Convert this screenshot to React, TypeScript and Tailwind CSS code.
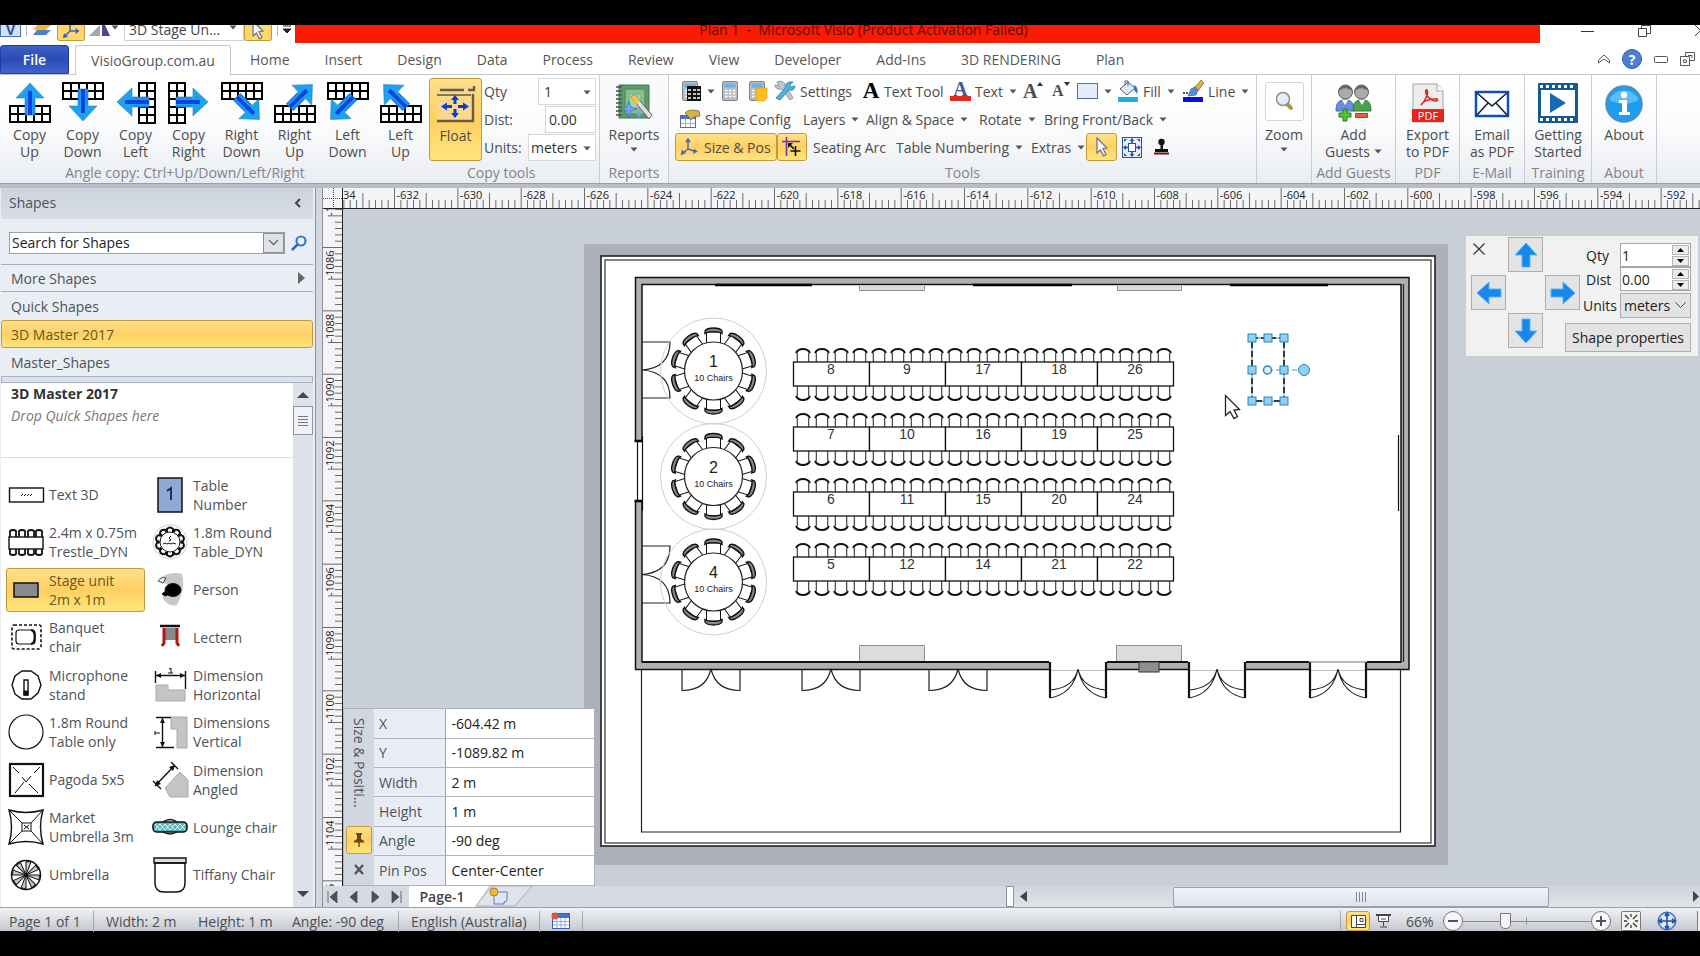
import type { ReactNode } from 'react';

const highlight = 'border border-[#c39a3a] rounded-[3px] bg-linear-to-b from-[#ffe08a] via-[#ffd062] to-[#ffe57c]';

const menuTabs = ['Home', 'Insert', 'Design', 'Data', 'Process', 'Review', 'View', 'Developer', 'Add-Ins', '3D RENDERING', 'Plan'];

const copyButtons = [
  { top: 'Copy', bottom: 'Up', angle: 0, grid: 'bottom' },
  { top: 'Copy', bottom: 'Down', angle: 180, grid: 'top' },
  { top: 'Copy', bottom: 'Left', angle: 270, grid: 'right' },
  { top: 'Copy', bottom: 'Right', angle: 90, grid: 'left' },
  { top: 'Right', bottom: 'Down', angle: 135, grid: 'top' },
  { top: 'Right', bottom: 'Up', angle: 45, grid: 'bottom' },
  { top: 'Left', bottom: 'Down', angle: 225, grid: 'top' },
  { top: 'Left', bottom: 'Up', angle: 315, grid: 'bottom' },
];

const trestleRows = [
  [8, 9, 17, 18, 26],
  [7, 10, 16, 19, 25],
  [6, 11, 15, 20, 24],
  [5, 12, 14, 21, 22],
];

const sizeRows = [
  ['X', '-604.42 m'],
  ['Y', '-1089.82 m'],
  ['Width', '2 m'],
  ['Height', '1 m'],
  ['Angle', '-90 deg'],
  ['Pin Pos', 'Center-Center'],
];

function Caret({ className = '' }: { className?: string }) {
  return (
    <svg width="8" height="5" viewBox="0 0 8 5" className={`shrink-0 ${className}`}>
      <path d="M0.5 0.5h7L4 4.5z" fill="#555" />
    </svg>
  );
}

/* ---------- ribbon icons ---------- */

function CopyIcon({ angle, grid }: { angle: number; grid: string }) {
  const vertical = grid === 'left' || grid === 'right';
  const ox = grid === 'right' ? 23 : 0;
  const oy = grid === 'bottom' ? 23 : 0;
  const cells = [];
  for (let a = 0; a < 5; a++) {
    for (let b = 0; b < 2; b++) {
      const x = ox + (vertical ? b * 8 : a * 8);
      const y = oy + (vertical ? a * 8 : b * 8);
      cells.push(<rect key={`${a}-${b}`} x={x + 1} y={y + 1} width="8" height="8" fill="#fff" stroke="#000" strokeWidth="2" />);
    }
  }
  const diagonal = angle % 90 !== 0;
  const rad = (angle * Math.PI) / 180;
  const dx = diagonal ? Math.sign(Math.sin(rad)) * 4 : 0;
  const dy = diagonal ? -Math.sign(Math.cos(rad)) * 4 : 0;
  return (
    <svg width="42" height="42" viewBox="0 0 42 42" className="overflow-visible">
      {cells}
      <g transform={`translate(${dx} ${dy}) rotate(${angle} 21 20)`}>
        <path d="M21 1L35 16H26V33H16V16H7z" fill="#1ba3f2" stroke="#3a7fa8" strokeWidth="0.6" />
        <path d="M21 9V33" stroke="#0b45e0" strokeWidth="4" />
        <path d="M17 33V17M25 33V17" stroke="#1b82ee" strokeWidth="1.4" />
      </g>
    </svg>
  );
}

function FloatIcon() {
  return (
    <svg width="42" height="40" viewBox="0 0 42 40">
      <path d="M2 2H39V37H2z" fill="#f6d98c" />
      <path d="M5 6H29M33 6H39V2M38 10V38M2 37H39" stroke="#6b5a45" strokeWidth="2.4" fill="none" />
      <path d="M2 11H36" stroke="#8a7448" strokeWidth="2" />
      <g fill="#1238d8">
        <path d="M20 11l4 5h-2.5v4h-3v-4H16zM20 34l4-5h-2.5v-4h-3v4H16zM6 22.5l6-4v2.5h5v3h-5v2.5zM34 22.5l-6-4v2.500h-5v3h5v2.5z" />
      </g>
    </svg>
  );
}

function ReportsIcon() {
  return (
    <svg width="40" height="40" viewBox="0 0 40 40">
      <path d="M5 2H35V35H5z" fill="#5f9a6b" stroke="#3f7350" />
      <path d="M11 6H31V31H11z" fill="#86bd8c" stroke="#4c8558" />
      <path d="M16 12H26V24H16z" fill="#a9d4aa" />
      {[4, 8, 12, 16, 20, 24, 28, 32].map(y => (
        <path key={y} d={`M2 ${y}h6`} stroke="#555" strokeWidth="1.6" />
      ))}
      <path d="M17 14l4-2 17 20-3 4z" fill="#ddd" stroke="#666" />
      <path d="M17 14l4-2 5 6-4 3z" fill="#ffc43a" />
      <path d="M15 18l2 6 6 2-6 2-2 7-2-7-6-2 6-2z" fill="#6ea4f4" stroke="#3468c8" strokeWidth="0.6" />
      <path d="M25 27l1 3 4 1-4 1-1 4-1-4-3-1 3-1z" fill="#6ea4f4" />
    </svg>
  );
}

function CalcIcon({ kind = 'plain' }: { kind?: 'plain' | 'table' | 'note' }) {
  return (
    <svg width="20" height="22" viewBox="0 0 20 22">
      <rect x="1.5" y="1.5" width="15" height="19" rx="1.5" fill="#b9bcc2" stroke="#7e838c" />
      <rect x="3.5" y="3.5" width="11" height="4" fill="#6db1e8" />
      {[10, 13, 16].map(y => (
        <path key={y} d={`M4 ${y}.5h2.5M8 ${y}.5h2.5M12 ${y}.5h2.5`} stroke="#fff" strokeWidth="1.6" />
      ))}
      {kind === 'table' && (
        <>
          <rect x="6" y="6" width="14" height="15" fill="#111" />
          {[10, 14, 18].map(y => (
            <path key={y} d={`M7 ${y}h3M12 ${y}h3M16 ${y}h3`} stroke="#fff" strokeWidth="1.5" />
          ))}
        </>
      )}
      {kind === 'note' && <path d="M8 8h11v10l-3 3H8z" fill="#ffbe1f" stroke="#e09c10" strokeWidth="0.6" />}
    </svg>
  );
}

function SettingsIcon() {
  return (
    <svg width="22" height="22" viewBox="0 0 22 22">
      <path d="M3 2c4-2 8 0 8 3l8 13-3 2L8 9C4 10 1 8 1 5l4 1z" fill="#c4c8cc" stroke="#7c8288" strokeWidth="0.8" />
      <path d="M19 2l-3 3 1 2 4-1c0 4-3 5-6 4L6 20l-4-2 9-10c0-4 3-7 8-6z" fill="#54aede" stroke="#2d7fb0" strokeWidth="0.8" />
    </svg>
  );
}

function ShapeConfigIcon() {
  return (
    <svg width="22" height="20" viewBox="0 0 22 20">
      <rect x="1.5" y="6.5" width="15" height="12" fill="#fff" stroke="#5a6d8c" />
      <path d="M2 8.5h14" stroke="#4a78c8" strokeWidth="3" />
      <path d="M6.5 10v8M11.5 10v8M2 14.5h14" stroke="#9bb0cf" />
      <path d="M6 4c4-4 9-3 14-2l1 5-6 1-3 3-2-3z" fill="#d9b240" stroke="#6b5a2c" strokeWidth="0.7" />
    </svg>
  );
}

function FillIcon() {
  return (
    <svg width="22" height="22" viewBox="0 0 22 22">
      <path d="M3 9l8-7 7 6-8 7z" fill="#dfe8f3" stroke="#45617f" />
      <path d="M17 5c4 2 4 6 3 9l-3-4z" fill="#3478c8" />
      <path d="M8 5V1h3v5" fill="none" stroke="#45617f" />
      <path d="M1 17h20v5H1z" fill="#16b2e2" />
    </svg>
  );
}

function LineIcon() {
  return (
    <svg width="22" height="22" viewBox="0 0 22 22">
      <path d="M12 8l7-8 3 3-6 8z" fill="#d9b240" stroke="#7c6a2c" strokeWidth="0.7" />
      <path d="M9 9l4-2 3 3-2 5-8 1z" fill="#5b89d8" stroke="#355da8" strokeWidth="0.7" />
      <path d="M1 13h5" stroke="#222" strokeWidth="1.5" strokeDasharray="2 1" />
      <path d="M1 17h20v5H1z" fill="#0a12d0" />
    </svg>
  );
}

function PointerIcon() {
  return (
    <svg width="16" height="20" viewBox="0 0 16 20">
      <path d="M3 1l10 10-4 .5 3 6-2.5 1.5-3-6L3 16z" fill="#f4f6ff" stroke="#6a6f85" strokeWidth="1.2" />
    </svg>
  );
}

function SizePosIcon() {
  return (
    <svg width="18" height="18" viewBox="0 0 18 18" stroke="#4466c0" fill="#4466c0">
      <path d="M8 4v7l6 2M8 11l-5 4" fill="none" strokeWidth="1.4" />
      <path d="M8 0l2.5 4h-5zM17.5 13.5l-4 2 .5-4.5zM1 17l1-5 3.5 3z" strokeWidth="0.5" />
    </svg>
  );
}

function SnapIcon() {
  return (
    <svg width="20" height="20" viewBox="0 0 20 20">
      <path d="M0 4.5h18M4.5 0v19" stroke="#6a34b8" strokeWidth="1.6" />
      <path d="M7 7l5 5M13.500 9v10M8.5 14h10" stroke="#111" strokeWidth="1.6" />
      <path d="M6 6h5l-5 5z" fill="#111" />
    </svg>
  );
}

function GuestsIcon() {
  return (
    <svg width="38" height="40" viewBox="0 0 38 40">
      <path d="M1 28c0-9 3-11 9-11s9 2 9 11z" fill="#6b8de0" stroke="#4568b8" />
      <path d="M18 28c0-9 3-11 9-11s9 2 9 11z" fill="#4aa152" stroke="#317a3a" />
      <path d="M7 17l3 5 3-5z" fill="#fff" />
      <path d="M24 17l3 5 3-5z" fill="#fff" />
      <circle cx="10.5" cy="9" r="7" fill="#aaa" stroke="#5e5e5e" />
      <circle cx="26.5" cy="9" r="7" fill="#aaa" stroke="#5e5e5e" />
      <path d="M4 8c1-8 12-8 13 0-4-3-8-4-13 0zM20 8c1-8 12-8 13 0-4-3-8-4-13 0z" fill="#666" />
      <path d="M8 26h4v4h4v4h-4v4H8v-4H4v-4h4z" fill="#53c234" stroke="#2a7c18" />
      <path d="M20.5 30.5h12v4h-12z" fill="#ef5a3a" stroke="#b83a20" />
    </svg>
  );
}

function PdfIcon() {
  return (
    <svg width="34" height="40" viewBox="0 0 34 40">
      <path d="M2 1h24l6 7v31H2z" fill="#ececec" stroke="#a5a5a5" />
      <path d="M26 1v7h6" fill="#fff" stroke="#a5a5a5" />
      <path d="M10 22c4-4 8-11 6-15-3-1-1 9 8 11 4 0 3-3-1-2-6 0-12 3-13 6z" fill="none" stroke="#d8262c" strokeWidth="1.6" />
      <path d="M1 26h32v13H1z" fill="#e8221c" />
      <text x="17" y="37" textAnchor="middle" fill="#fff" fontSize="11" fontFamily="Open Sans">PDF</text>
    </svg>
  );
}

function MailIcon() {
  return (
    <svg width="36" height="40" viewBox="0 0 36 40">
      <rect x="2" y="9" width="32" height="24" fill="#fff" stroke="#0f4fae" strokeWidth="2.5" />
      <path d="M3 10l15 13 15-13M3 32l11-12M33 32L22 20" fill="none" stroke="#123" strokeWidth="1.6" />
    </svg>
  );
}

function TrainingIcon() {
  return (
    <svg width="42" height="42" viewBox="0 0 42 42">
      <rect x="1" y="1" width="40" height="40" rx="1" fill="#135a94" />
      <path d="M3 4.5h36M3 37.5h36" stroke="#fff" strokeWidth="3" strokeDasharray="3 3" />
      <rect x="4" y="8" width="34" height="26" fill="#fff" />
      <path d="M13 11l16 10-16 10z" fill="#1a67b4" />
    </svg>
  );
}

function AboutIcon() {
  return (
    <svg width="40" height="40" viewBox="0 0 40 40">
      <circle cx="20" cy="21" r="18" fill="#1d9df0" stroke="#5a8cab" strokeWidth="1.5" />
      <path d="M5 17a16 15 0 0 1 30 0c-10 5-20 5-30 0z" fill="#5cbcf8" />
      <circle cx="20" cy="12" r="3.2" fill="#fff" />
      <path d="M15 17h8v12h3v3H15v-3h3v-9h-3z" fill="#fff" />
    </svg>
  );
}

/* ---------- ribbon pieces ---------- */

function Group({ label, className, children }: { label: string; className: string; children: ReactNode }) {
  return (
    <section className={`flex shrink-0 flex-col border-r border-[#c9ccd2] ${className}`}>
      <div className="flex h-[88px] pt-[3px]">{children}</div>
      <div className="h-5 text-center leading-5 whitespace-nowrap text-[#80848b]">{label}</div>
    </section>
  );
}

function BigButton({ icon, lines, caret = false, className = '' }: { icon: ReactNode; lines: string[]; caret?: boolean; className?: string }) {
  return (
    <button className={`flex h-[83px] flex-col items-center leading-[17px] whitespace-nowrap ${className}`}>
      <span className="flex h-12 items-center justify-center pt-[2px]">{icon}</span>
      {lines.map((line, i) => (
        <span key={line} className="flex items-center gap-1">
          {line}
          {caret && i > 0 && <Caret />}
        </span>
      ))}
      {caret && lines.length === 1 && <Caret className="mt-1" />}
    </button>
  );
}

function ToolButton({ icon, label, caret = false, className = '' }: { icon?: ReactNode; label?: string; caret?: boolean; className?: string }) {
  return (
    <button className={`flex h-7 shrink-0 items-center gap-1 whitespace-nowrap ${className}`}>
      {icon}
      {label}
      {caret && <Caret className="ml-[2px]" />}
    </button>
  );
}

function QuickAccess() {
  return (
    <header className="flex h-[19px] items-start overflow-hidden bg-white leading-3">
      <span className="flex h-3 w-[21px] items-end justify-center border border-t-0 border-[#4a6cb0] bg-[#d5e2f6] text-[14px] leading-3 font-bold text-[#2a52a6]">V</span>
      <span className="ml-[5px] h-[11px] w-px bg-[#b5b5b5]" />
      <svg width="20" height="12" viewBox="0 0 20 12" className="ml-[5px]">
        <path d="M5 0h14l-5 5H1z" fill="#f4b62d" />
        <path d="M5 5h14l-5 5H1z" fill="#4f80d8" />
      </svg>
      <button aria-label="Connectors" className="ml-[5px] flex h-4 w-7 justify-center rounded-b-[3px] border border-t-0 border-[#c39a3a] bg-[#ffd76b]">
        <svg width="18" height="14" viewBox="0 0 18 14">
          <path d="M8 0v6h6M8 6l-5 5" fill="none" stroke="#3a62c4" strokeWidth="1.5" />
          <path d="M17.5 6l-4-3v6zM1 13l1-5 4 4z" fill="#3a62c4" />
        </svg>
      </button>
      <svg width="22" height="12" viewBox="0 0 22 12" className="ml-1">
        <path d="M11 0v11H0z" fill="#a4a4ac" />
        <path d="M13 0h3l5 11h-8z" fill="#5a3e94" />
      </svg>
      <Caret />
      <div className="ml-[5px] flex h-4 w-[120px] border border-t-0 border-[#cfcfcf] pl-1 leading-[10px] text-[#444]">
        <span className="flex-1">3D Stage Un...</span>
        <Caret className="mr-[6px]" />
      </div>
      <button aria-label="Pointer tool" className="flex h-4 w-7 items-end justify-center rounded-b-[3px] border border-t-0 border-[#c39a3a] bg-[#ffd76b]">
        <PointerIcon />
      </button>
      <span className="ml-[5px] h-[11px] w-px bg-[#b5b5b5]" />
      <svg width="10" height="9" viewBox="0 0 10 9" className="ml-1">
        <path d="M1 1h8M1 4h8L5 8z" fill="#222" stroke="#222" />
      </svg>
      <h1 className="ml-[3px] flex h-[18px] flex-1 justify-center bg-[#fb1a02] pr-[108px] leading-[10px] whitespace-pre text-[#5e0d04]">
        Plan 1  -  Microsoft Visio (Product Activation Failed)
      </h1>
      <div className="flex w-[160px] items-start pl-[41px]">
        <button aria-label="Minimize" className="mt-[6px] h-px w-[13px] shrink-0 bg-[#333]" />
        <button aria-label="Restore" className="ml-[44px] shrink-0">
          <svg width="14" height="13" viewBox="0 0 14 13" fill="none" stroke="#444">
            <path d="M0.5 3.5h8v8h-8zM3.5 3V0.5h9v8H9" />
          </svg>
        </button>
        <button aria-label="Close" className="ml-[43px] shrink-0">
          <svg width="12" height="12" viewBox="0 0 12 12" stroke="#333">
            <path d="M0 0l11 11M11 0L0 11" />
          </svg>
        </button>
      </div>
    </header>
  );
}

function TabBar() {
  return (
    <nav className="flex h-[31px] items-end border-b border-[#c3c6cb] bg-white pt-[1px] text-[#565656]">
      <button className="h-[29px] w-[69px] rounded-t-[3px] border border-[#24409c] bg-linear-to-b from-[#3a60c8] via-[#2c4cb4] to-[#3f63d0] font-semibold text-white">File</button>
      <button className="-mb-px ml-[6px] h-[30px] w-[156px] rounded-t-[3px] border border-b-0 border-[#c3c6cb] bg-white">VisioGroup.com.au</button>
      <div className="flex h-[29px] flex-1 pl-[2px]">
        {menuTabs.map(tab => (
          <button key={tab} className="pr-[18px] pl-[17px] whitespace-nowrap">{tab}</button>
        ))}
      </div>
      <div className="flex h-[30px] items-center gap-3">
        <button aria-label="Collapse ribbon">
          <svg width="12" height="10" viewBox="0 0 12 10" fill="none" stroke="#555">
            <path d="M0.5 6L6 1l5.5 5v3L6 5 0.5 9z" />
          </svg>
        </button>
        <button aria-label="Help" className="flex h-5 w-5 items-center justify-center rounded-full border border-[#2f5cae] bg-[#4a7fd6] font-bold text-white">?</button>
        <button aria-label="Minimize window">
          <svg width="14" height="7" viewBox="0 0 14 7" fill="none" stroke="#555">
            <rect x="0.5" y="0.5" width="13" height="6" rx="1" />
          </svg>
        </button>
        <button aria-label="Restore window" className="mr-[5px]">
          <svg width="15" height="14" viewBox="0 0 15 14" fill="none" stroke="#555">
            <path d="M0.5 4.5h9v9h-9zM3.5 8h3v2.5h-3zM5.5 4V0.5h9v8H10M8 3.5h4V6" />
          </svg>
        </button>
      </div>
    </nav>
  );
}

function CopyToolsGroup() {
  const field = 'border border-[#d5d8dc] bg-white text-[#333]';
  return (
    <section className="flex w-[600px] shrink-0 flex-col border-r border-[#c9ccd2]">
      <div className="flex h-[88px] pt-[3px] pl-[3px]">
        {copyButtons.map(b => (
          <BigButton key={b.top + b.bottom} icon={<CopyIcon angle={b.angle} grid={b.grid} />} lines={[b.top, b.bottom]} className="w-[53px]" />
        ))}
        <BigButton icon={<FloatIcon />} lines={['Float']} className={`ml-[2px] w-[53px] ${highlight}`} />
        <div className="-mt-px ml-[2px] flex w-[112px] flex-col">
          <div className="flex h-7 items-center justify-between">
            <label htmlFor="copy-qty">Qty</label>
            <div className={`relative flex h-[27px] w-[58px] ${field}`}>
              <select id="copy-qty" className="w-full appearance-none pl-[5px] outline-none">
                <option>1</option>
              </select>
              <Caret className="absolute top-[11px] right-1" />
            </div>
          </div>
          <div className="flex h-7 items-center justify-between">
            <label htmlFor="copy-dist">Dist:</label>
            <input id="copy-dist" defaultValue="0.00" className={`h-[27px] w-[51px] pl-[3px] outline-none ${field}`} />
          </div>
          <div className="flex h-7 items-center justify-between">
            <label htmlFor="copy-units">Units:</label>
            <div className={`relative flex h-[27px] w-[68px] ${field}`}>
              <select id="copy-units" className="w-full appearance-none pl-[2px] outline-none">
                <option>meters</option>
              </select>
              <Caret className="absolute top-[11px] right-1" />
            </div>
          </div>
        </div>
      </div>
      <div className="flex h-5 leading-5 whitespace-nowrap text-[#80848b]">
        <span className="w-[370px] text-center">Angle copy: Ctrl+Up/Down/Left/Right</span>
        <span className="pl-[97px]">Copy tools</span>
      </div>
    </section>
  );
}

function Ribbon() {
  return (
    <div className="flex h-[109px] overflow-hidden border-b border-[#9a9ea6] bg-linear-to-b from-white via-[#fafbfc] to-[#e9ecf1] text-[#4c4c4c]">
      <CopyToolsGroup />
      <Group label="Reports" className="w-[69px] bg-[#f3f5f7]/50">
        <BigButton icon={<ReportsIcon />} lines={['Reports']} caret className="w-full" />
      </Group>
      <Group label="Tools" className="w-[588px]">
        <div className="-mt-px flex flex-col pl-[6px]">
          <div className="flex h-7">
            <ToolButton icon={<CalcIcon kind="table" />} caret className="ml-[6px] w-[40px]" />
            <ToolButton icon={<CalcIcon />} className="w-[27px]" />
            <ToolButton icon={<CalcIcon kind="note" />} className="w-[26px]" />
            <ToolButton icon={<SettingsIcon />} label="Settings" className="w-[88px]" />
            <ToolButton icon={<span className="w-[18px] font-['Liberation_Serif'] text-[23px] font-bold text-black">A</span>} label="Text Tool" className="w-[88px]" />
            <ToolButton
              icon={<span className="flex h-5 w-[21px] items-center justify-center border-b-5 border-[#e02a1c] font-['Liberation_Serif'] text-[20px] font-bold text-[#3a5a9c]">A</span>}
              label="Text"
              caret
              className="w-[73px]"
            />
            <ToolButton
              className="w-[29px]"
              icon={
                <span className="flex font-['Liberation_Serif'] text-[20px] font-bold">
                  A
                  <svg width="6" height="4" viewBox="0 0 6 4" className="mt-[6px]"><path d="M0 4l3-4 3 4z" fill="#333" /></svg>
                </span>
              }
            />
            <ToolButton
              className="w-[25px]"
              icon={
                <span className="flex font-['Liberation_Serif'] text-[16px] font-bold">
                  A
                  <svg width="6" height="4" viewBox="0 0 6 4" className="mt-[3px]"><path d="M0 0l3 4 3-4z" fill="#333" /></svg>
                </span>
              }
            />
            <ToolButton icon={<span className="h-4 w-[21px] border border-[#59708f] bg-[#e3edf9]" />} caret className="w-[40px]" />
            <ToolButton icon={<FillIcon />} label="Fill" caret className="w-[65px]" />
            <ToolButton icon={<LineIcon />} label="Line" caret />
          </div>
          <div className="flex h-7">
            <ToolButton icon={<ShapeConfigIcon />} label="Shape Config" className="ml-1 w-[124px]" />
            <ToolButton label="Layers" caret className="w-[63px]" />
            <ToolButton label="Align & Space" caret className="w-[113px]" />
            <ToolButton label="Rotate" caret className="w-[65px]" />
            <ToolButton label="Bring Front/Back" caret />
          </div>
          <div className="flex h-7 items-center">
            <ToolButton icon={<SizePosIcon />} label="Size & Pos" className={`w-[102px] gap-[6px] pl-[4px] ${highlight}`} />
            <ToolButton icon={<SnapIcon />} className={`w-[30px] justify-center ${highlight}`} />
            <ToolButton label="Seating Arc" className="ml-[6px] w-[83px]" />
            <ToolButton label="Table Numbering" caret className="w-[135px]" />
            <ToolButton label="Extras" caret className="w-[55px]" />
            <ToolButton icon={<PointerIcon />} className={`w-[31px] justify-center ${highlight}`} />
            <ToolButton
              className="ml-[5px] w-[31px]"
              icon={
                <svg width="20" height="21" viewBox="0 0 20 21">
                  <rect x="0.5" y="0.5" width="19" height="20" fill="#e6effc" stroke="#2a4f9c" />
                  <rect x="6.5" y="6.5" width="7" height="8" fill="#fff" stroke="#2a4f9c" />
                  <path d="M10 2v4M10 15v4M2 10.5h4M14 10.5h4" stroke="#2a4f9c" strokeWidth="1.6" />
                  <path d="M10 1l2.500 3h-5zM10 20l2.5-3h-5zM1 10.5l3-2.5v5zM19 10.5L16 8v5zM2 2h3L2 5zM18 2h-3l3 3zM2 19h3l-3-3zM18 19h-3l3-3z" fill="#2a4f9c" />
                </svg>
              }
            />
            <ToolButton
              icon={
                <svg width="17" height="18" viewBox="0 0 17 18">
                  <circle cx="8.5" cy="4" r="3.2" fill="#111" />
                  <path d="M7.5 5h2.5v7H7.5zM2 11h13v3H2z" fill="#111" />
                  <path d="M1 15.5h15" stroke="#6e1010" strokeWidth="2" />
                </svg>
              }
            />
          </div>
        </div>
      </Group>
      <Group label="" className="w-[55px]">
        <BigButton
          className="w-full"
          icon={
            <span className="-mt-[4px] flex h-[39px] w-[39px] items-center justify-center rounded-[3px] border border-[#d5d5d5] bg-white">
              <svg width="22" height="22" viewBox="0 0 22 22">
                <path d="M13 13l5 5" stroke="#b8963a" strokeWidth="4" strokeLinecap="round" />
                <circle cx="10" cy="9" r="6.5" fill="#e4eefc" stroke="#8a8f98" strokeWidth="1.5" />
              </svg>
            </span>
          }
          lines={['Zoom']}
          caret
        />
      </Group>
      <Group label="Add Guests" className="w-[84px]">
        <BigButton icon={<GuestsIcon />} lines={['Add', 'Guests']} caret className="w-full" />
      </Group>
      <Group label="PDF" className="w-[64px]">
        <BigButton icon={<PdfIcon />} lines={['Export', 'to PDF']} className="w-full" />
      </Group>
      <Group label="E-Mail" className="w-[65px]">
        <BigButton icon={<MailIcon />} lines={['Email', 'as PDF']} className="w-full" />
      </Group>
      <Group label="Training" className="w-[67px]">
        <BigButton icon={<TrainingIcon />} lines={['Getting', 'Started']} className="w-full" />
      </Group>
      <Group label="About" className="w-[65px]">
        <BigButton icon={<AboutIcon />} lines={['About']} className="w-full" />
      </Group>
    </div>
  );
}

/* ---------- stencil ---------- */

function StencilIcon({ children }: { children: ReactNode }) {
  return (
    <svg width="38" height="36" viewBox="0 0 38 36" fill="none" stroke="#111" className="shrink-0">
      {children}
    </svg>
  );
}

const spokes = [0, 45, 90, 135, 180, 225, 270, 315];
const chairAngles = [0, 36, 72, 108, 144, 180, 216, 252, 288, 324];

const stencil: { name: string[]; selected?: boolean; icon: ReactNode }[] = [
  { name: ['Text 3D'], icon: <><rect x="2.5" y="11" width="34" height="14" strokeWidth="1.4" /><path d="M14 19l2-2M17 19l2-2M20 19l2-2M23 19l2-2" /></> },
  { name: ['Table', 'Number'], icon: <><rect x="7" y="1" width="24" height="34" fill="#8ea9d6" strokeWidth="1.5" /><path d="M16 14l4-3v12" strokeWidth="1.8" stroke="#223" /></> },
  {
    name: ['2.4m x 0.75m', 'Trestle_DYN'],
    icon: (
      <>
        <rect x="2" y="13" width="34" height="12" strokeWidth="1.4" />
        {[3, 12, 21, 29].map(x => (
          <path key={x} d={`M${x} 13V9q-1-3 3-3t3 3v4M${x} 25v3q-1 3 3 3t3-3v-3`} strokeWidth="1.8" />
        ))}
      </>
    ),
  },
  {
    name: ['1.8m Round', 'Table_DYN'],
    icon: (
      <>
        <circle cx="19" cy="18" r="17" stroke="#ccc" />
        {chairAngles.map(a => (
          <path key={a} d="M16 8V5q3-3 6 0v3" strokeWidth="2" transform={`rotate(${a} 19 18)`} />
        ))}
        <circle cx="19" cy="18" r="10" fill="#fff" />
        <path d="M20 12l-2 2 2 2-2 1M12 20l2-1 2 1 2-1 2 1 2-1 3 1" />
      </>
    ),
  },
  { name: ['Stage unit', '2m x 1m'], selected: true, icon: <rect x="7" y="11" width="24" height="14" fill="#888890" strokeWidth="1.5" /> },
  {
    name: ['Person'],
    icon: (
      <>
        <path d="M7 9c4-6 14-10 24-7 3 10 0 22-5 31-6 2-12-2-15-8l8-3-1-9z" fill="#c9c9c9" stroke="none" />
        <path d="M7 9c2-3 5-4 8-3l-3 5z" fill="#eee" stroke="#444" />
        <ellipse cx="22" cy="18" rx="8" ry="6.5" fill="#000" />
        <path d="M11 22c4-4 7-3 8 0l-5 2z" fill="#000" />
      </>
    ),
  },
  { name: ['Banquet', 'chair'], icon: <><rect x="5" y="6" width="29" height="24" rx="2" strokeWidth="1.6" strokeDasharray="3 2" /><rect x="9" y="11" width="19" height="14" rx="3" strokeWidth="1.2" /><path d="M24 11c5 1 5 13 0 14" strokeWidth="2.2" /></> },
  { name: ['Lectern'], icon: <><path d="M9 7h20" strokeWidth="2.5" /><path d="M14 9h11v12H14z" fill="#888" stroke="none" /><path d="M13 9v15l-2 3M26 9v15l2 3" stroke="#b01818" strokeWidth="3" /></> },
  { name: ['Microphone', 'stand'], icon: <><path d="M15 4h9l7 5 3 9-3 8-7 6h-9l-7-5-3-9 3-9z" strokeWidth="1.4" /><path d="M17 13h4v15h-4z" strokeWidth="1.4" /><path d="M17 24h4v4h-4z" fill="#111" /></> },
  { name: ['Dimension', 'Horizontal'], icon: <><path d="M5 18h12v5h17v11H5z" fill="#c4c4c4" stroke="#aaa" /><path d="M4.5 4v12M34.5 4v18M5 8.5h29" strokeWidth="1.4" /><path d="M5 8.5l5-2.5v5zM34 8.5l-5-2.5v5z" fill="#111" stroke="none" /><path d="M18 2l2-1v5M17 6h5" /></> },
  { name: ['1.8m Round', 'Table only'], icon: <circle cx="19" cy="18" r="17" strokeWidth="1.2" /> },
  { name: ['Dimensions', 'Vertical'], icon: <><path d="M20 3h16v31H26V15h-6z" fill="#c4c4c4" stroke="#aaa" /><path d="M5 3.5h15M5 33.5h18M11.5 4v29" strokeWidth="1.4" /><path d="M11.5 4l2.5 5H9zM11.5 33l2.5-5H9z" fill="#111" stroke="none" /><path d="M4 17v4M4 19h5" /></> },
  { name: ['Pagoda 5x5'], icon: <><rect x="3" y="2" width="33" height="32" strokeWidth="2.2" /><path d="M6 5l6 6M33 5l-6 6M15 15l4 5 5-6M17 20l-9 11M22 22l9 9" /></> },
  { name: ['Dimension', 'Angled'], icon: <><path d="M14 26L29 10l8 8v17H19z" fill="#c4c4c4" stroke="#aaa" /><path d="M4 24L24 3M2 19l8 8M20 0l7 7" strokeWidth="1.4" /><path d="M4 24l2-6 4 4zM24 3l-2 6-4-4z" fill="#111" stroke="none" /></> },
  { name: ['Market', 'Umbrella 3m'], icon: <><path d="M2 1q17 5 34 0-5 17 0 34-17-5-34 0 5-17 0-34z" strokeWidth="1.4" /><path d="M2 1l13 13M36 1L24 14M2 35l13-13M36 35L24 22M15 14h9v8h-9zM17 16l5 4M22 16l-5 4" /></> },
  { name: ['Lounge chair'], icon: <><rect x="2" y="13" width="34" height="10" rx="4" fill="#5ab4b8" strokeWidth="1.6" /><path d="M12 13q7-5 14 0M12 23q7 4 14 0" strokeWidth="1.4" /><path d="M4 15l5 6 5-6 5 6 5-6 5 6 5-6M4 21l5-6 5 6 5-6 5 6 5-6 5 6" stroke="#e8ffff" /></> },
  {
    name: ['Umbrella'],
    icon: (
      <>
        <circle cx="19" cy="18" r="14.5" strokeWidth="1.5" />
        {spokes.map(a => (
          <path key={a} d="M19 18V4.5L24 5z" transform={`rotate(${a} 19 18)`} fill="#c9c9c9" />
        ))}
      </>
    ),
  },
  { name: ['Tiffany Chair'], icon: <><path d="M3 1h32v5H3z" fill="#ddd" strokeWidth="1.4" /><path d="M4 6h30v20q0 9-9 9H13q-9 0-9-9z" strokeWidth="1.5" /></> },
  { name: [], icon: <path d="M5 10h28v20H5z" strokeWidth="2" /> },
];

function ShapesPanel() {
  return (
    <aside className="flex w-[316px] shrink-0 flex-col border-r border-[#8b9099] bg-[#e9edf4] pr-[2px] pl-[1px] text-[#4e5257]">
      <div className="flex h-[31px] shrink-0 items-center justify-between bg-linear-to-b from-[#ccd3dc] to-[#d9dee6] pr-3 pb-[2px] pl-2">
        <h2>Shapes</h2>
        <button aria-label="Collapse">
          <svg width="7" height="10" viewBox="0 0 7 10" fill="none" stroke="#444" strokeWidth="2">
            <path d="M6 1L2 5l4 4" />
          </svg>
        </button>
      </div>
      <div className="flex h-[45px] shrink-0 items-center gap-[6px] pt-[2px] pl-[8px]">
        <div className="flex h-[22px] w-[276px] border border-[#9aa0a8] bg-white">
          <input aria-label="Search for Shapes" defaultValue="Search for Shapes" className="min-w-0 flex-1 pl-[2px] text-[#222] outline-none" />
          <button aria-label="Search history" className="flex w-[21px] items-center justify-center border border-[#8a8f97] bg-[#dfe2e6]">
            <svg width="11" height="7" viewBox="0 0 11 7" fill="none" stroke="#666" strokeWidth="1.3">
              <path d="M1 1l4.5 4.5L10 1" />
            </svg>
          </button>
        </div>
        <button aria-label="Search">
          <svg width="16" height="16" viewBox="0 0 16 16" fill="none">
            <path d="M7 9l-6 6" stroke="#3a5fa8" strokeWidth="2.5" />
            <circle cx="10" cy="6" r="4.5" stroke="#2a7fd4" strokeWidth="2.2" fill="#e8f2ff" />
          </svg>
        </button>
      </div>
      <button className="flex h-7 shrink-0 items-center justify-between border-y border-[#a9aeb6] pr-[8px] pl-[10px]">
        More Shapes
        <svg width="7" height="12" viewBox="0 0 7 12">
          <path d="M0 0l7 6-7 6z" fill="#666" />
        </svg>
      </button>
      <button className="h-7 shrink-0 pl-[10px] text-left">Quick Shapes</button>
      <button className={`h-7 shrink-0 pl-[9px] text-left text-[#6a5622] ${highlight}`}>3D Master 2017</button>
      <button className="h-7 shrink-0 pl-[10px] text-left">Master_Shapes</button>
      <div className="h-[7px] shrink-0 border border-[#a9b2c2] bg-[#dbe2ec]" />
      <div className="flex min-h-0 flex-1">
        <div className="min-w-0 flex-1 overflow-hidden bg-white">
          <div className="h-[75px] border-b border-[#dcdcdc] pl-[10px] leading-[22px]">
            <h3 className="font-bold text-[#333]">3D Master 2017</h3>
            <p className="text-[#777] italic">Drop Quick Shapes here</p>
          </div>
          <div className="mt-[13px] grid h-[475px] auto-rows-fr grid-cols-[144px_1fr] pl-[6px] leading-[19px]">
            {stencil.map((item, i) => (
              <button
                key={i}
                className={`my-[2px] flex items-center gap-[4px] text-left whitespace-nowrap ${item.selected ? `mr-[6px] -ml-px ${highlight} text-[#6a5622]` : ''}`}
              >
                <StencilIcon>{item.icon}</StencilIcon>
                <span>
                  {item.name.map(line => (
                    <span key={line} className="block">{line}</span>
                  ))}
                </span>
              </button>
            ))}
          </div>
        </div>
        <div className="flex w-5 flex-col items-center bg-[#dde2ea]">
          <svg width="12" height="7" viewBox="0 0 12 7" className="my-2">
            <path d="M0 7l6-6 6 6z" fill="#444" />
          </svg>
          <div className="flex h-[29px] w-5 flex-col items-center justify-center gap-[2px] border border-[#8d95a3] bg-[#eef1f6]">
            <i className="h-px w-[10px] bg-[#777]" />
            <i className="h-px w-[10px] bg-[#777]" />
            <i className="h-px w-[10px] bg-[#777]" />
            <i className="h-px w-[10px] bg-[#777]" />
          </div>
          <svg width="12" height="7" viewBox="0 0 12 7" className="mt-auto mb-[9px]">
            <path d="M0 0l6 6 6-6z" fill="#444" />
          </svg>
        </div>
      </div>
    </aside>
  );
}

/* ---------- rulers ---------- */

const UNIT = 63.33;

function TopRuler() {
  const majors = Array.from({ length: 40 }, (_, i) => ({ x: -11.8 + i * UNIT, value: -634 + i * 2 }));
  return (
    <svg className="block h-full w-full" fontFamily="Open Sans" fontSize="11" fill="#222">
      {majors.map(m => (
        <g key={m.value}>
          <text x={m.x + 2} y="11">{m.value}</text>
          {Array.from({ length: 10 }, (_, k) => (
            <path key={k} d={`M${m.x + (k * UNIT) / 10} ${k === 0 ? 0 : k === 5 ? 5 : 12}V20`} stroke="#6c6c6c" />
          ))}
        </g>
      ))}
    </svg>
  );
}

function LeftRuler() {
  const majors = Array.from({ length: 20 }, (_, i) => ({ y: -24.8 + i * UNIT, value: -1084 - i * 2 }));
  return (
    <svg className="block h-full w-full" fontFamily="Open Sans" fontSize="11" fill="#222">
      {majors.map(m => (
        <g key={m.value}>
          <text transform={`translate(11 ${m.y + 3}) rotate(-90)`} textAnchor="end">{m.value}</text>
          {Array.from({ length: 10 }, (_, k) => (
            <path key={k} d={`M${k === 0 ? 0 : k === 5 ? 5 : 12} ${m.y + (k * UNIT) / 10}H20`} stroke="#6c6c6c" />
          ))}
        </g>
      ))}
    </svg>
  );
}

/* ---------- floor plan ---------- */

function TrestleChair({ x, y, flip = false }: { x: number; y: number; flip?: boolean }) {
  return (
    <g transform={`translate(${x} ${y}) scale(1 ${flip ? -1 : 1})`} fill="none" stroke="#111">
      <path d="M1.8 15V5M13.2 15V5" stroke="#333" strokeWidth="1.1" />
      <path d="M0.5 5C2 1.800 4 1 7.5 1S13 1.8 14.5 5" strokeWidth="1.9" />
    </g>
  );
}

function RoundTable({ cy, label }: { cy: number; label: number }) {
  return (
    <g transform={`translate(713.5 ${cy})`}>
      <circle r="53" fill="none" stroke="#cfcfcf" />
      {chairAngles.map(a => (
        <g key={a} transform={`rotate(${a})`} fill="#fff" stroke="#111">
          <path d="M-7 -27V-39H7V-27" strokeWidth="1" />
          <path d="M-8.5 -37.5V-40C-6 -44 6 -44 8.5 -40V-37.5C5 -40 -5 -40 -8.5 -37.5z" fill="#888" strokeWidth="1.4" />
        </g>
      ))}
      <circle r="29" fill="#fff" stroke="#222" strokeWidth="1.2" />
      <text y="-4" textAnchor="middle" fontSize="16" fill="#222">{label}</text>
      <text y="10" textAnchor="middle" fontSize="9" fill="#222">10 Chairs</text>
    </g>
  );
}

function InnerDoor({ y, h }: { y: number; h: number }) {
  return (
    <path
      d={`M642 ${y}h28q0 ${h / 2 - 2} -28 ${h / 2}q28 2 28 ${h / 2}h-28`}
      fill="none"
      stroke="#222"
      strokeWidth="1.2"
    />
  );
}

function SingleDoor({ x }: { x: number }) {
  return (
    <path d={`M${x - 29} 669v21.5q24 0 29 -21.5q5 21.5 29 21.5v-21.5`} fill="none" stroke="#222" strokeWidth="1.2" />
  );
}

function DoubleDoor({ x }: { x: number }) {
  return (
    <g fill="none" stroke="#222">
      <path d={`M${x - 29} 660h58v10h-58z`} fill="#fff" stroke="none" />
      <path d={`M${x - 28} 662V698M${x + 28} 662V698`} stroke="#111" strokeWidth="2.2" />
      <path d={`M${x - 28} 698q23 -4 28 -29q5 25 28 29M${x - 28} 690q24 -2 28 -21q4 19 28 21`} strokeWidth="1.2" />
    </g>
  );
}

function FloorPlan() {
  const handles = [
    [1252, 338], [1268, 338], [1284, 338],
    [1252, 370], [1284, 370],
    [1252, 401], [1268, 401], [1284, 401],
  ];
  return (
    <svg className="block h-full w-full" fontFamily="Liberation Sans">
      <g transform="translate(-343 -209)">
        <rect x="584" y="244" width="864" height="621" fill="#acb0b8" />
        <rect x="601" y="256" width="834" height="590" fill="#fff" stroke="#222" strokeWidth="1.6" />
        <rect x="605" y="260" width="826" height="583" fill="#fff" stroke="#333" strokeWidth="1.2" />
        <path d="M641.5 669V832H1400.5V669" fill="none" stroke="#222" strokeWidth="1.2" />

        {/* walls */}
        <path d="M635.5 277.5H1409V669.5H635.5zM642 284.5V662H1401V284.5z" fill="#b0b0b0" fillRule="evenodd" stroke="#111" strokeWidth="1.5" />
        <path d="M1403.5 284V662" stroke="#222" strokeWidth="1.2" />
        <path d="M642 662H1401" stroke="#111" strokeWidth="2" />
        <path d="M715 285h97M973 285h99M1230 285h98" stroke="#000" strokeWidth="2.5" />
        <path d="M1398.5 435V511" stroke="#111" strokeWidth="1.2" />
        <rect x="634" y="441" width="10" height="60" fill="#fff" />
        <path d="M634.5 441h8M634.5 501h8" stroke="#000" strokeWidth="2.5" />
        <path d="M637.5 441v60M642.5 436v75" stroke="#111" strokeWidth="1.2" />

        <g fill="#dcdcdc" stroke="#8f8f8f">
          <path d="M859.5 286v4.5h65V286M1117.5 286v4.5h64V286M859.5 661v-15.5h65V661M1116.5 661v-15.5h65V661" />
        </g>

        <InnerDoor y={342} h={56} />
        <InnerDoor y={546} h={57} />
        <SingleDoor x={711} />
        <SingleDoor x={831} />
        <SingleDoor x={958} />
        <DoubleDoor x={1078} />
        <DoubleDoor x={1217} />
        <DoubleDoor x={1338} />
        <path d="M1309 662h57" stroke="#777" />
        <rect x="1139" y="662" width="20" height="10" fill="#8f8f8f" stroke="#333" />

        <RoundTable cy={371} label={1} />
        <RoundTable cy={476.5} label={2} />
        <RoundTable cy={582} label={4} />

        {trestleRows.map((row, r) => {
          const y = 362 + r * 65;
          return (
            <g key={r}>
              {Array.from({ length: 20 }, (_, i) => (
                <g key={i}>
                  <TrestleChair x={795.5 + i * 19} y={y - 14} />
                  <TrestleChair x={795.5 + i * 19} y={y + 39} flip />
                </g>
              ))}
              {row.map((n, c) => (
                <g key={n}>
                  <rect x={793.5 + c * 76} y={y} width="76" height="24" fill="#fff" stroke="#111" strokeWidth="1.3" />
                  <text x={831 + c * 76} y={y + 12} textAnchor="middle" fontSize="14" fill="#333">{n}</text>
                </g>
              ))}
            </g>
          );
        })}

        {/* selected stage unit */}
        <rect x="1252" y="338" width="32" height="63" fill="none" stroke="#5aa7cf" strokeWidth="1.2" />
        <rect x="1252" y="338" width="32" height="63" fill="none" stroke="#111" strokeWidth="1.5" strokeDasharray="6 3" />
        <path d="M1268 370h30" stroke="#3f95c4" strokeWidth="1.2" strokeDasharray="5 3" />
        <g fill="#8fd0f6" stroke="#2b86b8">
          {handles.map(([x, y]) => (
            <rect key={`${x}-${y}`} x={x - 4} y={y - 4} width="8" height="8" />
          ))}
          <circle cx="1267.5" cy="370" r="4" fill="#d9f0fc" strokeWidth="1.5" />
          <circle cx="1304" cy="370" r="5.5" />
        </g>
        <path d="M1225.5 395.5v20l4.5-4 4 7 3.5-2-3.5-6.5 5.5-.5z" fill="#fff" stroke="#222" strokeWidth="1.3" />
      </g>
    </svg>
  );
}

function NudgeButton({ angle, label, className }: { angle: number; label: string; className: string }) {
  return (
    <button aria-label={label} className={`flex h-[35px] w-[35px] items-center justify-center border border-[#adadad] bg-[#e3e3e3] ${className}`}>
      <svg width="26" height="26" viewBox="0 0 26 26">
        <path d="M13 1l11 12h-7v12H9V13H2z" fill="#1787ee" stroke="#56b4f6" transform={`rotate(${angle} 13 13)`} />
      </svg>
    </button>
  );
}

function Spinner({ id, label, value }: { id: string; label: string; value: string }) {
  return (
    <div className="flex h-6 items-center">
      <label htmlFor={id} className="w-[34px]">{label}</label>
      <div className="flex h-6 w-[71px] border border-[#a6a6a6] bg-white">
        <input id={id} defaultValue={value} className="w-[51px] pl-[1px] outline-none" />
        <div className="flex w-[17px] flex-col justify-center gap-px">
          <button aria-label={`${label} up`} className="flex h-[10px] items-center justify-center border border-[#b5b5b5] bg-[#ececec]">
            <svg width="7" height="4" viewBox="0 0 7 4"><path d="M0 4l3.5-4L7 4z" /></svg>
          </button>
          <button aria-label={`${label} down`} className="flex h-[10px] items-center justify-center border border-[#b5b5b5] bg-[#ececec]">
            <svg width="7" height="4" viewBox="0 0 7 4"><path d="M0 0l3.5 4L7 0z" /></svg>
          </button>
        </div>
      </div>
    </div>
  );
}

function NudgePanel() {
  return (
    <div className="absolute top-[27px] right-[2px] flex h-[120px] w-[232px] bg-[#f1f1f1] text-[#222]">
      <div className="grid h-[110px] grid-cols-[35px_35px_35px] gap-x-[2px] gap-y-[3px] pt-[1px] pl-[5px]">
        <button aria-label="Close panel" className="flex h-6 w-4 items-center justify-center">
          <svg width="12" height="12" viewBox="0 0 12 12" stroke="#333" strokeWidth="1.2">
            <path d="M0.5 0.5l11 11M11.5 0.5l-11 11" />
          </svg>
        </button>
        <NudgeButton angle={0} label="Nudge up" className="col-start-2" />
        <NudgeButton angle={270} label="Nudge left" className="col-start-1" />
        <NudgeButton angle={90} label="Nudge right" className="col-start-3" />
        <NudgeButton angle={180} label="Nudge down" className="col-start-2" />
      </div>
      <div className="absolute top-[7px] right-[7px] flex flex-col items-end">
        <Spinner id="panel-qty" label="Qty" value="1" />
        <Spinner id="panel-dist" label="Dist" value="0.00" />
        <div className="mt-[2px] flex items-center">
          <label htmlFor="panel-units" className="w-[37px]">Units</label>
          <div className="relative flex h-[25px] w-[71px] border border-[#adadad] bg-[#e3e3e3]">
            <select id="panel-units" className="w-full appearance-none pl-[3px] outline-none">
              <option>meters</option>
            </select>
            <svg width="11" height="7" viewBox="0 0 11 7" fill="none" stroke="#444" className="absolute top-2 right-1">
              <path d="M0.5 0.5l5 5 5-5" />
            </svg>
          </div>
        </div>
        <button className="mt-[5px] h-[29px] w-[126px] border border-[#adadad] bg-[#e3e3e3] whitespace-nowrap">Shape properties</button>
      </div>
    </div>
  );
}

function SizePositionWindow() {
  return (
    <div className="absolute bottom-0 left-0 flex h-[178px] w-[252px] border border-[#aeb3bb] bg-white text-[#4e5257]">
      <div className="flex w-[30px] flex-col items-center bg-[#d0d7e1]">
        <span className="h-[117px] pt-[9px] leading-[28px] [writing-mode:vertical-rl]">Size &amp; Positi...</span>
        <button aria-label="Pin window" className={`flex h-7 w-[26px] items-center justify-center ${highlight}`}>
          <svg width="12" height="14" viewBox="0 0 12 14" fill="#5a4a1c">
            <path d="M3 0h6v1.5L8 2v4l3 2v1.5H6.7V14H5.3V9.5H1V8l3-2V2L3 1.5z" />
          </svg>
        </button>
        <button aria-label="Close window" className="flex flex-1 items-center">
          <svg width="10" height="11" viewBox="0 0 10 11" stroke="#555" strokeWidth="2.4">
            <path d="M1 1l8 9M9 1l-8 9" />
          </svg>
        </button>
      </div>
      <table className="h-full flex-1">
        <tbody>
          {sizeRows.map(([name, value]) => (
            <tr key={name} className="h-[29px] border-b border-[#b0b5bc] last:border-b-0">
              <th className="w-[71px] border-r border-[#a0a5ad] bg-[#e8edf5] pl-[5px] text-left font-normal">{name}</th>
              <td className="pl-[6px] text-[#222]">{value}</td>
            </tr>
          ))}
        </tbody>
      </table>
    </div>
  );
}

function PageBar() {
  return (
    <div className="flex h-[21px] shrink-0 bg-[#d5dae3] text-[#444]">
      <div className="flex w-[86px] items-center justify-between bg-[#d5dae3] pr-[7px] pl-[4px]">
        {['M1 0v12M10 0v12L3 6z', 'M9 0v12L2 6z', 'M2 0v12l7-6z', 'M10 0v12M1 0v12l7-6z'].map((d, i) => (
          <button key={d} aria-label={['First page', 'Previous page', 'Next page', 'Last page'][i]}>
            <svg width="11" height="12" viewBox="0 0 11 12" fill="#4a4f58" stroke="#4a4f58" strokeWidth="0.8">
              <path d={d} />
            </svg>
          </button>
        ))}
      </div>
      <button className="w-[66px] bg-white leading-5 font-semibold">Page-1</button>
      <button aria-label="New page">
        <svg width="60" height="21" viewBox="0 0 60 21" className="block">
          <path d="M0 0H14L0 21z" fill="#fff" />
          <path d="M1 20L14 3Q16 1 20 0H57L40 20H1" fill="#dfe3eb" stroke="#a9aeb8" />
          <path d="M19 6h13v8q0 2-3 2v2H19z" fill="#dce5fa" stroke="#6478b8" />
          <circle cx="19" cy="6" r="4" fill="#f4b83a" stroke="#b87a1c" />
        </svg>
      </button>
      <div className="flex-1" />
      <div className="w-2 border border-[#8f949d] bg-white" />
      <div className="flex w-[686px] items-center bg-linear-to-b from-[#cfd5dd] to-[#dfe3ea] pl-[6px]">
        <svg width="7" height="11" viewBox="0 0 7 11">
          <path d="M7 0v11L0 5.5z" fill="#444" />
        </svg>
        <div className="ml-[146px] flex h-5 w-[376px] items-center justify-center gap-[2px] rounded-[2px] border border-[#98a0ae] bg-linear-to-b from-[#f2f5f9] to-[#dde3ec]">
          {[0, 1, 2, 3].map(i => (
            <i key={i} className="h-[10px] w-px bg-[#888]" />
          ))}
        </div>
        <svg width="7" height="11" viewBox="0 0 7 11" className="ml-auto">
          <path d="M0 0v11l6-5.5z" fill="#444" />
        </svg>
      </div>
    </div>
  );
}

function StatusBar() {
  const round = 'flex h-5 w-5 shrink-0 items-center justify-center rounded-full border border-[#777] bg-[#f6f7f9]';
  return (
    <footer className="flex h-6 shrink-0 items-center border-t border-[#9a9fa8] bg-linear-to-b from-[#f0f1f4] via-[#dcdee4] to-[#c4c7d0] pt-[3px] whitespace-nowrap text-[#4c4f54]">
      <span className="w-[94px] border-r border-[#a5a8b0] pl-[9px]">Page 1 of 1</span>
      <span className="w-[92px] pl-3">Width: 2 m</span>
      <span className="w-[94px] pl-3">Height: 1 m</span>
      <span className="w-[119px] border-r border-[#a5a8b0] pl-3">Angle: -90 deg</span>
      <span className="w-[141px] border-r border-[#a5a8b0] pl-3">English (Australia)</span>
      <button aria-label="Macros" className="flex h-5 w-[43px] items-center justify-center border-r border-[#a5a8b0]">
        <svg width="20" height="18" viewBox="0 0 20 18">
          <rect x="1.5" y="1.5" width="17" height="15" fill="#fff" stroke="#3a5fb0" />
          <path d="M2 4h16" stroke="#3f74d0" strokeWidth="4" />
          <path d="M6 6v10M10 6v10M14 6v10M2 9.5h16M2 13h16" stroke="#8fb0e0" />
          <circle cx="4" cy="4" r="3.5" fill="#d85a3c" />
        </svg>
      </button>
      <div className="ml-auto flex h-full items-center border-l border-[#a5a8b0] pl-[5px]">
        <button aria-label="Normal view" className={`flex h-5 w-6 items-center justify-center ${highlight}`}>
          <svg width="15" height="13" viewBox="0 0 15 13" fill="#fff" stroke="#444">
            <path d="M0.5 0.5h14v12h-14zM5.5 0v12.5M9 3.5h3v3H9zM5.5 9.5h9" />
          </svg>
        </button>
        <button aria-label="Full screen" className="ml-[6px]">
          <svg width="15" height="14" viewBox="0 0 15 14" fill="#fff" stroke="#444">
            <path d="M0 1h15" strokeWidth="2" />
            <path d="M2.5 2v5.5h10V2M7.500 8v4M4 13h7M5 5h5" />
          </svg>
        </button>
        <span className="ml-[15px] w-[37px]">66%</span>
        <button aria-label="Zoom out" className={round}>
          <i className="h-[2px] w-[10px] bg-[#555]" />
        </button>
        <div className="relative flex w-[128px] items-center">
          <span className="absolute left-[63px] h-2 w-px bg-[#999]" />
          <input
            type="range"
            aria-label="Zoom"
            defaultValue={32}
            className="relative h-px w-full appearance-none bg-[#8a8d94] [&::-webkit-slider-thumb]:h-4 [&::-webkit-slider-thumb]:w-[11px] [&::-webkit-slider-thumb]:appearance-none [&::-webkit-slider-thumb]:rounded-b-[5px] [&::-webkit-slider-thumb]:border [&::-webkit-slider-thumb]:border-[#777] [&::-webkit-slider-thumb]:bg-[#f4f5f7]"
          />
        </div>
        <button aria-label="Zoom in" className={round}>
          <svg width="10" height="10" viewBox="0 0 10 10" stroke="#555" strokeWidth="2">
            <path d="M5 0v10M0 5h10" />
          </svg>
        </button>
        <button aria-label="Fit page" className="ml-[10px]">
          <svg width="20" height="20" viewBox="0 0 20 20">
            <rect x="0.5" y="0.5" width="19" height="19" rx="1" fill="#f2f2f2" stroke="#777" />
            <path d="M4 4l4 4M16 4l-4 4M4 16l4-4M16 16l-4-4M10 3v3M10 14v3M3 10h3M14 10h3" stroke="#333" strokeWidth="1.3" />
          </svg>
        </button>
        <button aria-label="Pan and zoom" className="ml-4">
          <svg width="20" height="20" viewBox="0 0 20 20">
            <circle cx="10" cy="10" r="9" fill="#6f9ae0" stroke="#3a68bc" />
            <circle cx="10" cy="10" r="7.5" fill="#dfeaff" />
            <path d="M10 3v14M3 10h14M8 5l2-3 2 3M8 15l2 3 2-3M5 8l-3 2 3 2M15 8l3 2-3 2" fill="none" stroke="#2450a8" strokeWidth="1.6" />
          </svg>
        </button>
        <span className="ml-5 h-5 w-[3px] border-l border-[#777] bg-[#eee]" />
      </div>
    </footer>
  );
}

export default function App() {
  return (
    <div className="flex h-screen flex-col overflow-hidden bg-black py-[25px] font-['Open_Sans',sans-serif] text-[14px]">
      <QuickAccess />
      <TabBar />
      <Ribbon />
      <div className="h-1 shrink-0 bg-[#b9bec6]" />
      <main className="flex min-h-0 flex-1 bg-[#d3d8e0]">
        <ShapesPanel />
        <div className="ml-[6px] flex min-w-0 flex-1 flex-col border-l border-[#8b9099]">
          <div className="grid min-h-0 flex-1 grid-cols-[20px_minmax(0,1fr)] grid-rows-[21px_minmax(0,1fr)]">
            <div className="border-r border-b border-[#222] bg-[#f4f4f6]">
              <svg width="19" height="20" viewBox="0 0 19 20" stroke="#444" strokeDasharray="1 1">
                <path d="M10.5 0v20M0 10.5h19" />
              </svg>
            </div>
            <div className="overflow-hidden border-b border-[#222] bg-[#f4f4f6]">
              <TopRuler />
            </div>
            <div className="overflow-hidden border-r border-[#222] bg-[#f4f4f6]">
              <LeftRuler />
            </div>
            <div className="relative overflow-hidden bg-[#c9cfd7]">
              <FloorPlan />
              <NudgePanel />
              <SizePositionWindow />
            </div>
          </div>
          <PageBar />
        </div>
      </main>
      <StatusBar />
    </div>
  );
}
